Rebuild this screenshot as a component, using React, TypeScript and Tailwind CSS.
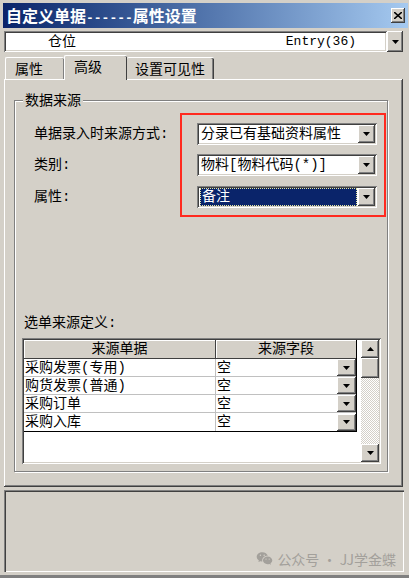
import React from "react";
import { RiWechatFill } from "react-icons/ri";

const raised =
  "shadow-[inset_-1px_-1px_0_#404040,inset_1px_1px_0_#ffffff,inset_-2px_-2px_0_#808080,inset_2px_2px_0_#d4d0c8]";
const sunken =
  "shadow-[inset_1px_1px_0_#808080,inset_-1px_-1px_0_#ffffff,inset_2px_2px_0_#404040,inset_-2px_-2px_0_#d4d0c8]";

function Arrow({ up = false }: { up?: boolean }) {
  return (
    <svg width="7" height="4" viewBox="0 0 7 4" className={up ? "rotate-180" : ""}>
      <path d="M0 0h7L3.5 4z" fill="#000" />
    </svg>
  );
}

function DropBtn({ className = "" }: { className?: string }) {
  return (
    <div className={`flex items-center justify-center bg-[#d4d0c8] ${raised} ${className}`}>
      <Arrow />
    </div>
  );
}

function Combo({ text, focused = false }: { text: string; focused?: boolean }) {
  return (
    <div className={`flex h-[22px] w-[180px] items-center bg-white p-[2px] ${sunken}`}>
      <div className="flex h-full flex-1 items-center pl-[1px] pr-[1px]">
        {focused ? (
          <div className="flex h-[18px] w-full items-center border border-dotted border-[#e8e8a0] bg-[#0a246a] pl-[1px] text-white">
            {text}
          </div>
        ) : (
          <span className="pl-[1px]">{text}</span>
        )}
      </div>
      <DropBtn className="h-[18px] w-[17px]" />
    </div>
  );
}

export default function App() {
  const rows = ["采购发票(专用)", "购货发票(普通)", "采购订单", "采购入库"];

  return (
    <div className="flex h-[578px] w-[409px] flex-col overflow-hidden bg-[#d4d0c8] pt-[3px] font-['Liberation_Mono','Noto_Sans_CJK_SC',monospace] text-[14px] leading-none text-black">
      {/* Title bar */}
      <div className="ml-[3px] flex h-[25px] w-[405px] items-center justify-between bg-gradient-to-r from-[#0a246a] to-[#a6caf0] pl-[3px] pr-[3px]">
        <span className="font-['Noto_Sans_CJK_SC',sans-serif] text-[16px] font-bold text-white">
          自定义单据<span className="font-['Liberation_Mono',monospace] text-[13px]">------</span>属性设置
        </span>
        <div className={`flex h-[15px] w-[14px] items-center justify-center bg-[#d4d0c8] ${raised}`}>
          <svg width="8" height="7" viewBox="0 0 8 7">
            <path d="M0 0l8 7M8 0L0 7" stroke="#000" strokeWidth="1.6" />
          </svg>
        </div>
      </div>

      {/* Field combo */}
      <div className="ml-[4px] mt-[3px] flex h-[21px] w-[399px]">
        <div className={`flex flex-1 items-center justify-between bg-white pl-[44px] pr-[31px] ${sunken}`}>
          <span>仓位</span>
          <span className="text-[13px]">Entry(36)</span>
        </div>
        <DropBtn className="h-[21px] w-[16px]" />
      </div>

      {/* Tabs */}
      <div className="mt-[3px] flex h-[24px] items-end pl-[5px]">
        <div className="flex h-[22px] w-[59px] items-center rounded-t-[2px] border-l border-t border-white pl-[9px] pt-[2px] shadow-[inset_-1px_0_0_#808080]">
          属性
        </div>
        <div className="relative z-10 -mb-[1px] flex h-[25px] w-[63px] items-center rounded-t-[2px] border-l border-t border-white bg-[#d4d0c8] pl-[9px] shadow-[inset_-1px_0_0_#404040]">
          高级
        </div>
        <div className="flex h-[22px] w-[87px] items-center rounded-t-[2px] border-t border-white pl-[8px] pt-[2px] shadow-[inset_-1px_0_0_#404040,inset_-2px_0_0_#808080]">
          设置可见性
        </div>
      </div>

      {/* Tab panel */}
      <div className={`ml-[4px] flex h-[408px] w-[399px] flex-col pl-[10px] pt-[21px] ${raised}`}>
        <div className="relative h-[372px] w-[374px] border border-[#808080] shadow-[inset_1px_1px_0_#ffffff,1px_1px_0_#ffffff]">
          <span className="absolute -top-[9px] left-[8px] bg-[#d4d0c8] px-[2px] leading-[18px]">数据来源</span>

          {/* Data source rows */}
          <div className="mt-[12px] flex">
            <div className="flex w-[165px] flex-col pl-[19px] pt-[10px]">
              <div className="flex h-[22px] items-center">单据录入时来源方式:</div>
              <div className="mt-[9px] flex h-[22px] items-center">类别:</div>
              <div className="mt-[10px] flex h-[22px] items-center">属性:</div>
            </div>
            <div className="flex w-[206px] flex-col border-2 border-[#ff2a1f] pb-[7px] pl-[15px] pt-[8px]">
              <Combo text="分录已有基础资料属性" />
              <div className="mt-[9px]">
                <Combo text="物料[物料代码(*)]" />
              </div>
              <div className="mt-[10px]">
                <Combo text="备注" focused />
              </div>
            </div>
          </div>

          {/* Source definition table */}
          <div className="mt-[97px] pl-[9px] leading-[18px]">选单来源定义:</div>
          <div className={`ml-[7px] mt-[6px] flex h-[126px] w-[359px] bg-white p-[2px] ${sunken}`}>
            <div className="flex w-[333px] flex-col">
              <div className="flex flex-col border-b border-r border-black">
                <div className="flex h-[19px] leading-[17px]">
                  <div className="flex w-[192px] items-center justify-center border-b border-r border-[#404040] bg-[#d4d0c8] shadow-[inset_1px_1px_0_#ffffff]">
                    来源单据
                  </div>
                  <div className="flex flex-1 items-center justify-center border-b border-[#404040] bg-[#d4d0c8] shadow-[inset_1px_1px_0_#ffffff]">
                    来源字段
                  </div>
                </div>
                {rows.map((r, i) => (
                  <div
                    key={r}
                    className={`flex h-[18px] leading-[16px] ${i < rows.length - 1 ? "border-b border-[#c0c0c0]" : ""}`}
                  >
                    <div className="flex w-[192px] items-center border-r border-[#c0c0c0] pl-[1px]">{r}</div>
                    <div className="flex flex-1 items-center justify-between pl-[1px]">
                      <span>空</span>
                      <DropBtn className="h-[17px] w-[19px]" />
                    </div>
                  </div>
                ))}
              </div>
            </div>
            <div className="w-[4px]" />
            <div className="flex w-[18px] flex-col">
              <div className={`flex h-[18px] items-center justify-center bg-[#d4d0c8] ${raised}`}>
                <Arrow up />
              </div>
              <div className={`h-[20px] bg-[#d4d0c8] ${raised}`} />
              <div className="flex-1 bg-[repeating-conic-gradient(#d4d0c8_0%_25%,#ffffff_0%_50%)] bg-[length:2px_2px]" />
              <div className={`flex h-[18px] items-center justify-center bg-[#d4d0c8] ${raised}`}>
                <Arrow />
              </div>
            </div>
          </div>
        </div>
      </div>

      {/* Bottom info panel */}
      <div className="relative ml-[4px] mt-[3px] h-[82px] w-[400px] shadow-[inset_1px_1px_0_#808080,inset_2px_2px_0_#404040,inset_-1px_-1px_0_#ffffff]">
        <div className="absolute bottom-[5px] right-[8px] flex items-center gap-[4px] font-['Noto_Sans_CJK_SC',sans-serif] text-[14px] text-[#a3a09b]">
          <RiWechatFill className="h-[17px] w-[17px]" />
          <span>公众号 · JJ学金蝶</span>
        </div>
      </div>

      <div className="mt-[3px] h-[3px] bg-[#808080]" />
    </div>
  );
}
